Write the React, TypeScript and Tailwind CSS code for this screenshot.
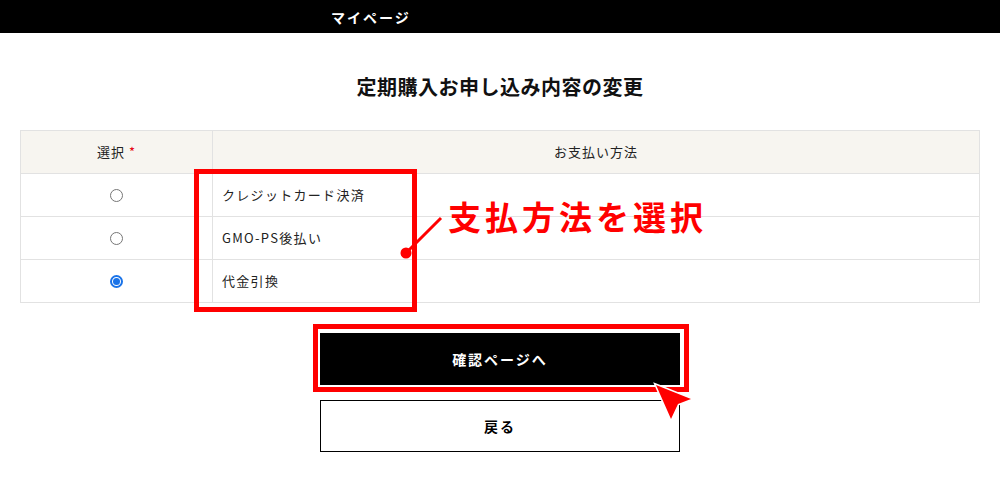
import React from "react";

const rows = [
  { label: "クレジットカード決済", checked: false },
  { label: "GMO-PS後払い", checked: false },
  { label: "代金引換", checked: true },
];

function Radio({ checked }: { checked: boolean }) {
  return checked ? (
    <span className="flex h-[13px] w-[13px] items-center justify-center rounded-full border-2 border-[#1a73e8] bg-white">
      <span className="h-[7px] w-[7px] rounded-full bg-[#1a73e8]" />
    </span>
  ) : (
    <span className="h-[13px] w-[13px] rounded-full border border-[#767676] bg-white" />
  );
}

export default function App() {
  return (
    <div className="relative h-[500px] w-[1000px] overflow-hidden bg-white font-['Noto_Sans_CJK_JP','Noto_Sans',sans-serif] text-[#222]">
      <header className="flex h-[33px] items-center bg-black pl-[331px]">
        <span className="text-[14px] font-bold leading-none tracking-[2px] text-white">マイページ</span>
      </header>

      <h1 className="mt-[34px] text-center text-[20px] font-bold leading-[40px] tracking-[0.5px] text-[#111]">
        定期購入お申し込み内容の変更
      </h1>

      <div className="mx-[20px] mt-[23px] border border-[#e2e2e2]">
        <div className="grid h-[43px] grid-cols-[192px_1fr] border-b border-[#e2e2e2] bg-[#f7f5f0] text-[13px] tracking-[1px]">
          <div className="flex items-center justify-center border-r border-[#e2e2e2]">
            <span>選択</span>
            <span className="ml-[4px] text-[#e60012]">*</span>
          </div>
          <div className="flex items-center justify-center">お支払い方法</div>
        </div>
        {rows.map((r, i) => (
          <div
            key={r.label}
            className={`grid grid-cols-[192px_1fr] text-[13px] tracking-[1.3px] ${
              i < rows.length - 1 ? "h-[43px] border-b border-[#e2e2e2]" : "h-[42px]"
            }`}
          >
            <div className="flex items-center justify-center border-r border-[#e2e2e2]">
              <Radio checked={r.checked} />
            </div>
            <div className="flex items-center pl-[9px]">{r.label}</div>
          </div>
        ))}
      </div>

      <div className="mt-[30px] flex flex-col items-center gap-[15px]">
        <button className="flex h-[52px] w-[360px] items-center justify-center bg-black text-[14px] font-bold tracking-[2px] text-white">
          確認ページへ
        </button>
        <button className="flex h-[52px] w-[360px] items-center justify-center border border-black bg-white text-[14px] font-bold tracking-[2px] text-black">
          戻る
        </button>
      </div>

      {/* annotations */}
      <div className="pointer-events-none absolute left-[194px] top-[169px] h-[143px] w-[223px] border-[5px] border-[#ff0000]" />
      <div className="pointer-events-none absolute left-[313px] top-[324px] h-[68px] w-[376px] border-[5px] border-[#ff0000]" />
      <div className="pointer-events-none absolute left-[448px] top-[199px] text-[33px] font-bold leading-[34px] tracking-[4px] text-[#ff0000]">
        支払方法を選択
      </div>
      <svg className="pointer-events-none absolute left-0 top-0" width="1000" height="500" viewBox="0 0 1000 500">
        <line x1="407" y1="252" x2="441" y2="218" stroke="#ff0000" strokeWidth="3" />
        <circle cx="406" cy="253" r="5.5" fill="#ff0000" />
        <polygon
          points="656,385 691,399 678,404 671,419"
          fill="#ff0000"
          stroke="#ffffff"
          strokeWidth="3"
          strokeLinejoin="miter"
          paintOrder="stroke"
        />
      </svg>
    </div>
  );
}
